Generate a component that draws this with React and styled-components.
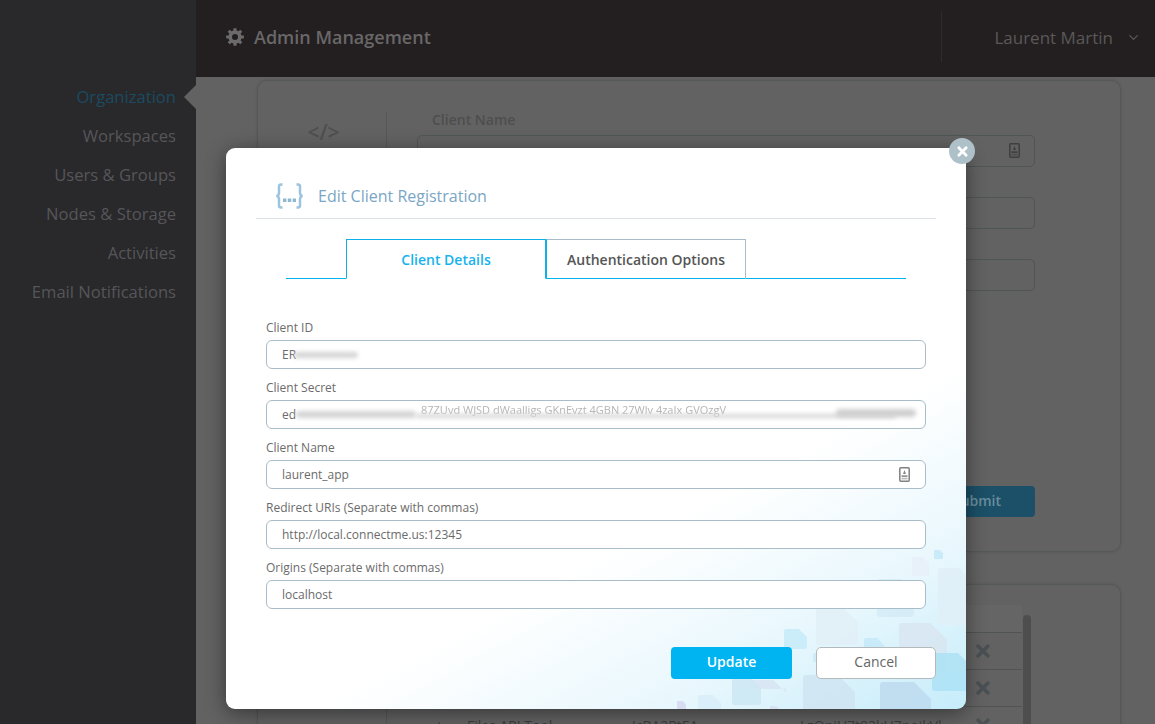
import React from 'react';
import styled, { createGlobalStyle } from 'styled-components';
import { FaTimes } from 'react-icons/fa';
import { FiChevronDown } from 'react-icons/fi';

const Global = createGlobalStyle`
  html, body { margin: 0; padding: 0; background: #636262; }
  * { box-sizing: border-box; }
  body { font-family: "Open Sans", "Liberation Sans", sans-serif; }
`;

const Page = styled.div`
  position: relative;
  width: 1155px;
  height: 724px;
  overflow: hidden;
  display: flex;
  background: #636262;
`;

const Sidebar = styled.nav`
  width: 196px;
  flex: none;
  background: #29282b;
  padding-top: 78px;
  display: flex;
  flex-direction: column;
`;

const NavItem = styled.div`
  position: relative;
  height: 39px;
  line-height: 38px;
  padding-right: 20px;
  text-align: right;
  font-size: 16.6px;
  font-weight: 500;
  color: ${p => (p.$active ? '#1b4b60' : '#565659')};
  ${p => p.$active && `
    &::after {
      content: '';
      position: absolute;
      right: 0;
      top: 7px;
      border-style: solid;
      border-width: 12px 12px 12px 0;
      border-color: transparent #636262 transparent transparent;
    }
  `}
`;

const Main = styled.div`
  flex: 1;
  display: flex;
  flex-direction: column;
  min-width: 0;
`;

const Header = styled.header`
  height: 77px;
  flex: none;
  background: #231f20;
  display: flex;
  align-items: center;
  padding: 0 14px 3px 30px;
  color: #6c6a6a;
`;

const Title = styled.h1`
  margin: 0 0 0 10px;
  font-size: 18px;
  font-weight: 600;
  color: #696768;
  flex: 1;
`;

const HeaderDivider = styled.div`
  width: 1px;
  height: 50px;
  background: #2f2b2c;
  margin-right: 52px;
`;

const UserName = styled.span`
  font-size: 17px;
  color: #5a5858;
  margin-right: 13px;
`;

const Content = styled.div`
  padding: 3px 34px 0 61px;
  display: flex;
  flex-direction: column;
  gap: 32px;
`;

const Card = styled.section`
  flex: none;
  height: ${p => p.$h}px;
  border: 1px solid #555858;
  border-radius: 10px;
  display: flex;
  box-shadow: 0 0 3px rgba(0, 0, 0, 0.15);
`;

const CardSide = styled.div`
  width: 128px;
  flex: none;
  display: flex;
  justify-content: center;
  padding-top: 37px;
  padding-left: 3px;
  font-size: 21px;
  font-weight: 600;
  line-height: 28px;
  color: #4f4f4f;
`;

const Rule = styled.div`
  width: 1px;
  flex: none;
  margin-top: ${p => p.$top}px;
  background: #555858;
`;

const CardBody = styled.div`
  flex: 1;
  padding: 29px 85px 0 30px;
  display: flex;
  flex-direction: column;
`;

const BgLabel = styled.div`
  font-size: 14px;
  font-weight: 600;
  color: #4e4e4e;
  padding-left: 15px;
  line-height: 20px;
  margin-bottom: 5px;
`;

const BgInput = styled.div`
  position: relative;
  height: 32px;
  border: 1px solid #505555;
  border-radius: 5px;
  margin-bottom: 30px;
`;

const BgIconSlot = styled.span`
  position: absolute;
  right: 14px;
  top: 7px;
  display: flex;
`;

const BgSubmit = styled.div`
  margin: 165px 0 0 auto;
  width: 116px;
  height: 31px;
  border-radius: 4px;
  background: #1b5068;
  color: #6a8d9c;
  font-size: 14px;
  font-weight: 600;
  line-height: 30px;
  text-align: center;
`;

const Table = styled.div`
  flex: none;
  width: 647px;
  padding-top: 20px;
  position: relative;
`;

const TableHead = styled.div`
  height: 28px;
  width: 635px;
  background: #666565;
  border-bottom: 1px solid #505354;
`;

const TableRow = styled.div`
  height: 37px;
  width: 635px;
  border-bottom: 1px solid ${p => (p.$last ? 'transparent' : '#505354')};
  display: grid;
  grid-template-columns: 80px 165px 168px 1fr 78px;
  align-items: center;
  font-size: 14px;
  color: #3c3c3c;
  white-space: nowrap;
`;

const RowX = styled.span`
  display: flex;
  justify-content: center;
  color: #4a5054;
  font-size: 20px;
  grid-column: 5;
`;

const RowMark = styled.span`
  text-align: center;
  padding-left: 24px;
`;

const Scrollbar = styled.div`
  position: absolute;
  left: 636px;
  top: 30px;
  width: 8px;
  height: 200px;
  border-radius: 4px;
  background: #4f4e4e;
`;

const Modal = styled.div`
  position: absolute;
  left: 226px;
  top: 148px;
  width: 740px;
  height: 561px;
  border-radius: 9px;
  padding: 0 30px;
  background: linear-gradient(152deg, #ffffff 0%, #ffffff 64%, #e8f7fd 83%, #c6ecfa 100%);
  box-shadow: 0 4px 20px rgba(0, 0, 0, 0.45);
  display: flex;
  flex-direction: column;
`;

const Decor = styled.svg`
  position: absolute;
  left: 0;
  top: 0;
  border-radius: 9px;
`;

const CloseButton = styled.button`
  position: absolute;
  right: -9px;
  top: -10px;
  width: 26px;
  height: 26px;
  padding: 0;
  border: none;
  border-radius: 50%;
  background: #aec1c9;
  color: #fff;
  display: flex;
  align-items: center;
  justify-content: center;
  font-size: 15px;
`;

const ModalHead = styled.div`
  position: relative;
  height: 71px;
  border-bottom: 1px solid #dde2ea;
  display: flex;
  align-items: center;
  gap: 14px;
  padding: 35px 0 9px 19px;
  margin-bottom: 20px;
`;

const ModalTitle = styled.h2`
  margin: 0;
  font-size: 16px;
  font-weight: 400;
  color: #7aa6c4;
`;

const Tabs = styled.div`
  position: relative;
  display: flex;
  margin: 0 30px;
  padding-left: 60px;
  height: 40px;
  border-bottom: 1px solid #00b4f0;
`;

const Tab = styled.div`
  width: 200px;
  height: 40px;
  text-align: center;
  line-height: 39px;
  font-size: 14px;
  font-weight: 600;
  color: ${p => (p.$active ? '#18b2ee' : '#555555')};
  background: ${p => (p.$active ? '#fff' : 'transparent')};
  border: 1px solid ${p => (p.$active ? '#0fb0ea' : '#a6bdc9')};
  border-bottom: ${p => (p.$active ? '1px solid #fff' : 'none')};
  border-left-width: ${p => (p.$active ? 1 : 0)}px;
  & + & { border-left: 1px solid #0fb0ea; }
`;

const Form = styled.div`
  position: relative;
  padding: 35px 10px 0;
  display: flex;
  flex-direction: column;
  gap: 5px;
`;

const Field = styled.div`
  position: relative;
  height: 55px;
  display: flex;
  flex-direction: column;
  justify-content: flex-end;
`;

const FieldLabel = styled.label`
  font-size: 12px;
  color: #6b6b6b;
  line-height: 17px;
  margin-bottom: 4px;
`;

const Input = styled.input`
  width: 100%;
  height: 29px;
  border: 1px solid #a9bdc8;
  border-radius: 6px;
  background: #fff;
  padding: 0 15px;
  font-family: inherit;
  font-size: 12px;
  color: #6b6b6b;
  outline: none;
`;

const Smear = styled.span`
  position: absolute;
  left: ${p => p.$left}px;
  bottom: ${p => p.$bottom}px;
  width: ${p => p.$w}px;
  height: ${p => p.$height}px;
  border-radius: 4px;
  background: ${p => p.$color || '#d4d4d4'};
  filter: blur(2px);
  pointer-events: none;
`;

const SmearText = styled.span`
  position: absolute;
  left: ${p => p.$left}px;
  bottom: 12px;
  font-size: 11px;
  line-height: 14px;
  color: #b4b4b4;
  white-space: nowrap;
  filter: blur(0.5px);
  pointer-events: none;
`;

const FieldIcon = styled.span`
  position: absolute;
  right: 16px;
  bottom: 7px;
  display: flex;
`;

const Footer = styled.div`
  position: relative;
  margin-top: 38px;
  display: flex;
  justify-content: flex-end;
  gap: 24px;
`;

const UpdateButton = styled.button`
  width: 121px;
  height: 32px;
  border: none;
  border-radius: 4px;
  background: #00b4f1;
  color: #fff;
  padding: 0 0 4px;
  font-family: inherit;
  font-size: 14px;
  font-weight: 600;
`;

const CancelButton = styled.button`
  width: 120px;
  height: 32px;
  border: 1px solid #b4b9bb;
  border-radius: 5px;
  background: #fff;
  color: #666;
  padding: 0 0 4px;
  font-family: inherit;
  font-size: 14px;
`;

const NameIcon = ({ stroke = '#808080', fill = '#8a8a8a' }) => (
  <svg width="11" height="15" viewBox="0 0 11 15" aria-hidden="true">
    <rect x="0.8" y="0.8" width="9.4" height="13.4" rx="1" fill="none" stroke={stroke} strokeWidth="1.5" />
    <path d="M5.5 3 L7 7 H4 Z" fill={fill} />
    <rect x="2.5" y="8.3" width="6" height="1.6" fill={fill} />
    <rect x="2.5" y="10.8" width="6" height="1.6" fill={fill} opacity=".6" />
  </svg>
);

const gearPath = (() => {
  const cx = 9, cy = 9, n = 8, outer = 9, inner = 6.6;
  let d = '';
  for (let i = 0; i < n; i++) {
    const a = (i / n) * Math.PI * 2;
    const w = 0.2, g = 0.39 - 0.17;
    const pts = [
      [inner, a - g - 0.02], [outer, a - w + 0.03], [outer, a + w - 0.03], [inner, a + g + 0.02],
    ];
    pts.forEach(([r, t]) => {
      const x = (cx + r * Math.sin(t)).toFixed(2);
      const y = (cy - r * Math.cos(t)).toFixed(2);
      d += `${d ? 'L' : 'M'}${x} ${y} `;
    });
  }
  return `${d}Z M${cx + 3} ${cy} A3 3 0 1 0 ${cx - 3} ${cy} A3 3 0 1 0 ${cx + 3} ${cy} Z`;
})();

const GearIcon = () => (
  <svg width="18" height="18" viewBox="0 0 18 18" aria-hidden="true">
    <path d={gearPath} fill="#6c6a6a" fillRule="evenodd" />
  </svg>
);

const BraceIcon = () => (
  <svg width="29" height="26" viewBox="0 0 29 26" fill="none" aria-hidden="true">
    <path d="M7.5 1.5 H6 Q4 1.5 4 3.5 V10 Q4 12.5 1.5 13 Q4 13.5 4 16 V22.5 Q4 24.5 6 24.5 H7.5" stroke="#9cc4dc" strokeWidth="2.5" />
    <path d="M21.5 1.5 H23 Q25 1.5 25 3.5 V10 Q25 12.5 27.5 13 Q25 13.5 25 16 V22.5 Q25 24.5 23 24.5 H21.5" stroke="#9cc4dc" strokeWidth="2.5" />
    <rect x="8" y="15.5" width="3.4" height="3.5" fill="#8fb9d2" />
    <rect x="12.8" y="15.5" width="3.4" height="3.5" fill="#8fb9d2" />
    <rect x="17.6" y="15.5" width="3.4" height="3.5" fill="#8fb9d2" />
  </svg>
);

const fileShape = (x1, y1, x2, y2) => {
  const w = x2 - x1;
  const cut = Math.min(w * 0.35, 17);
  const r = Math.min(3, w * 0.1);
  return `M${x1 + r} ${y1} H${x2 - cut} L${x2} ${y1 + cut} V${y2 - r} Q${x2} ${y2} ${x2 - r} ${y2} H${x1 + r} Q${x1} ${y2} ${x1} ${y2 - r} V${y1 + r} Q${x1} ${y1} ${x1 + r} ${y1} Z`;
};

const shapes = [
  [934, 550, 943, 559, '#c5e9f8'],
  [912, 557, 929, 576, '#e8eef8'],
  [938, 568, 970, 625, '#e0eff7'],
  [877, 579, 914, 617, '#d5ecf7'],
  [816, 608, 858, 645, '#e1f0f7'],
  [784, 629, 807, 649, '#c8ebf9'],
  [864, 638, 884, 660, '#c5e9f8'],
  [813, 653, 830, 662, '#cdeaf8'],
  [899, 623, 947, 671, '#d8e7f1'],
  [932, 653, 972, 691, '#aee2f5'],
  [803, 675, 855, 712, '#cfe6f2'],
  [880, 682, 931, 712, '#bfdcf0'],
  [750, 680, 786, 689, '#d8e5f3'],
  [732, 678, 761, 705, '#cde8f4'],
  [698, 695, 721, 712, '#d8eef8'],
  [677, 701, 686, 712, '#d6daf0'],
  [770, 706, 780, 712, '#d8e0f2'],
];

const navItems = ['Organization', 'Workspaces', 'Users & Groups', 'Nodes & Storage', 'Activities', 'Email Notifications'];

export default function App() {
  return (
    <Page>
      <Global />
      <Sidebar>
        {navItems.map((n, i) => (
          <NavItem key={n} $active={i === 0}>{n}</NavItem>
        ))}
      </Sidebar>
      <Main>
        <Header>
          <GearIcon />
          <Title>Admin Management</Title>
          <HeaderDivider />
          <UserName>Laurent Martin</UserName>
          <FiChevronDown size={15} color="#5a5858" />
        </Header>
        <Content>
          <Card $h={472}>
            <CardSide>&lt;/&gt;</CardSide>
            <Rule $top={30} />
            <CardBody>
              <BgLabel>Client Name</BgLabel>
              <BgInput>
                <BgIconSlot><NameIcon stroke="#3e3e3e" fill="#3e3e3e" /></BgIconSlot>
              </BgInput>
              <BgInput />
              <BgInput />
              <BgSubmit>Submit</BgSubmit>
            </CardBody>
          </Card>
          <Card $h={300}>
            <CardSide />
            <Rule $top={0} />
            <Table>
              <TableHead />
              <TableRow><RowX><FaTimes /></RowX></TableRow>
              <TableRow><RowX><FaTimes /></RowX></TableRow>
              <TableRow $last>
                <RowMark>+</RowMark>
                <span>Files API Tool</span>
                <span>JcBA2PtEA</span>
                <span>LzQnjU7t92kU7pojkVl</span>
                <RowX><FaTimes /></RowX>
              </TableRow>
              <Scrollbar />
            </Table>
          </Card>
        </Content>
      </Main>

      <Modal>
        <Decor width="740" height="561" viewBox="226 148 740 561" aria-hidden="true">
          {shapes.map(([a, b, c, d, col], i) => (
            <path key={i} d={fileShape(a, b, c, d)} fill={col} opacity="0.9" />
          ))}
        </Decor>
        <CloseButton aria-label="Close"><FaTimes /></CloseButton>
        <ModalHead>
          <BraceIcon />
          <ModalTitle>Edit Client Registration</ModalTitle>
        </ModalHead>
        <Tabs>
          <Tab $active>Client Details</Tab>
          <Tab>Authentication Options</Tab>
        </Tabs>
        <Form>
          <Field>
            <FieldLabel>Client ID</FieldLabel>
            <Input readOnly value="ER" />
            <Smear $left={28} $bottom={11} $w={64} $height={6} />
          </Field>
          <Field>
            <FieldLabel>Client Secret</FieldLabel>
            <Input readOnly value="ed" />
            <SmearText $left={155}>87ZUvd WJSD  dWaalligs GKnEvzt 4GBN  27Wlv  4zaIx GVOzgV</SmearText>
            <Smear $left={30} $bottom={11} $w={120} $height={7} />
            <Smear $left={150} $bottom={11} $w={480} $height={4} $color="#d6d6d6" />
            <Smear $left={570} $bottom={12} $w={80} $height={8} $color="#cfcfcf" />
          </Field>
          <Field>
            <FieldLabel>Client Name</FieldLabel>
            <Input readOnly value="laurent_app" />
            <FieldIcon><NameIcon /></FieldIcon>
          </Field>
          <Field>
            <FieldLabel>Redirect URIs (Separate with commas)</FieldLabel>
            <Input readOnly value="http://local.connectme.us:12345" />
          </Field>
          <Field>
            <FieldLabel>Origins (Separate with commas)</FieldLabel>
            <Input readOnly value="localhost" />
          </Field>
        </Form>
        <Footer>
          <UpdateButton>Update</UpdateButton>
          <CancelButton>Cancel</CancelButton>
        </Footer>
      </Modal>
    </Page>
  );
}
